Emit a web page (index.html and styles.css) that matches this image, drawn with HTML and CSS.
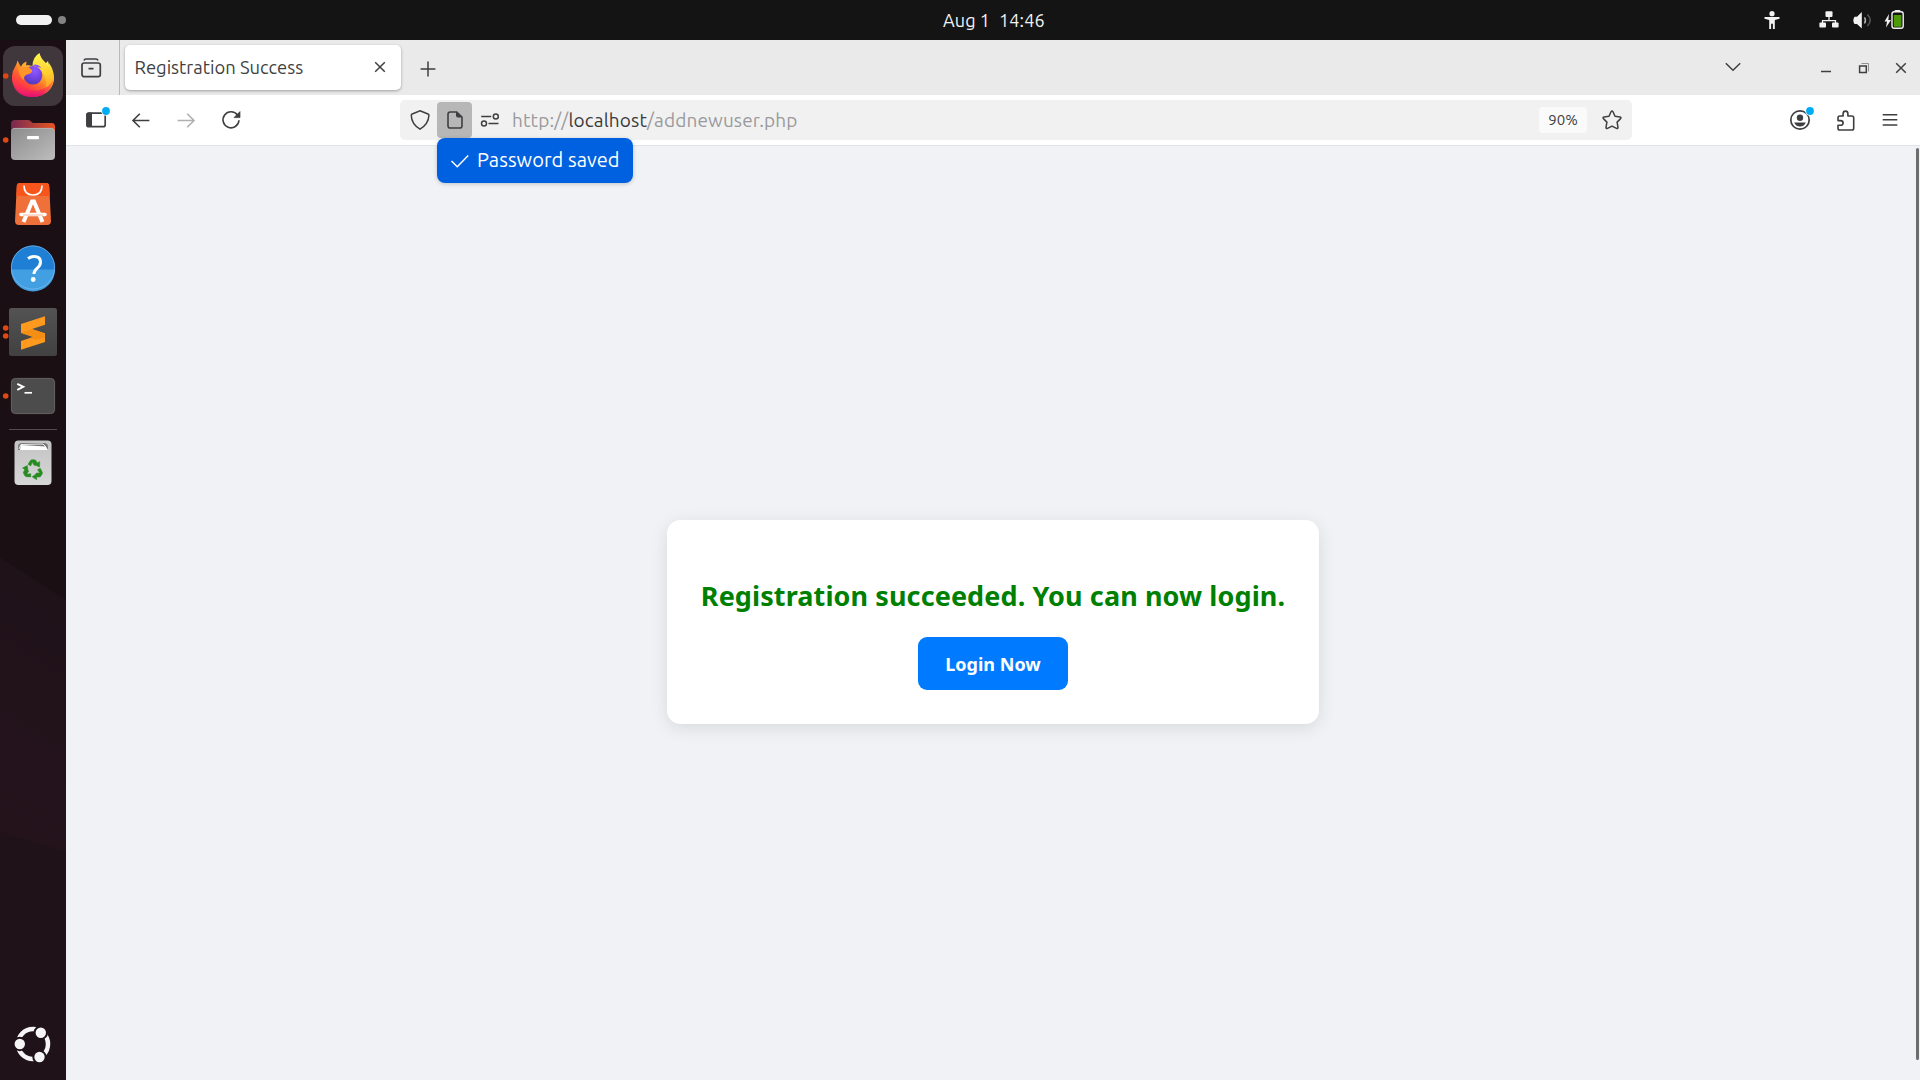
FILE: index.html
```html
<!DOCTYPE html>
<html lang="en">
<head>
<meta charset="utf-8">
<title>Registration Success</title>
<link rel="stylesheet" href="styles.css">
</head>
<body>
<header class="topbar">
  <div class="workspaces"><span class="pill"></span><span class="dot"></span></div>
  <div class="clock"><span class="t-date">Aug 1</span><span class="t-time">14:46</span></div>
  <div class="tray">
    <svg class="i-access" width="16" height="20" viewBox="0 0 16 20" fill="#f2f2f2"><circle cx="8" cy="3.7" r="2.6"/><path d="M.5 7h15v1.8L10.8 10v9H8.9v-5.2H7.1V19H5.200V10L.5 8.800z"/></svg>
    <svg class="i-net" width="20" height="20" viewBox="0 0 20 20"><path d="M10 7v3M3.500 13v-2.300h13V13" fill="none" stroke="#f2f2f2" stroke-width="1.300"/><g fill="#f2f2f2"><rect x="6.500" y="1.300" width="7" height="5.600" rx="1"/><rect x=".4" y="12.500" width="6.600" height="5" rx="1"/><rect x="13" y="12.500" width="6.600" height="5" rx="1"/></g></svg>
    <svg class="i-vol" width="20" height="20" viewBox="0 0 20 20"><path d="M1.500 6.800H4L8.800 2v16.500L4 14H1.500Q.3 12 .3 10.400T1.500 6.800z" fill="#f2f2f2"/><path d="M11.500 7.300q2 3 0 6.200" fill="none" stroke="#b0b0b0" stroke-width="1.400"/><path d="M14.500 4.500q5.500 5.800 0 11.500" fill="none" stroke="#5c5c5c" stroke-width="1.400"/></svg>
    <svg class="i-bat" width="22" height="20" viewBox="0 0 22 20"><path d="M5 4 .5 11.500H3L2 17.500l5-7.500H4.300z" fill="#f2f2f2"/><rect x="10.500" y="0" width="6" height="3" rx="1" fill="#f2f2f2"/><rect x="8" y="1.800" width="11.200" height="16.500" rx="2.200" fill="#141414" stroke="#f2f2f2" stroke-width="1.400"/><rect x="9.800" y="5" width="7.600" height="11.800" fill="#4e9a06"/></svg>
  </div>
</header>
<div class="desktop">
  <nav class="dock">
    <div class="app active"><svg width="60" height="60" viewBox="0 0 60 60">
      <defs>
        <linearGradient id="fx" x1=".85" y1=".1" x2=".2" y2=".95"><stop offset="0" stop-color="#fff44f"/><stop offset=".3" stop-color="#ffb02a"/><stop offset=".55" stop-color="#ff6a2b"/><stop offset=".8" stop-color="#ff3647"/><stop offset="1" stop-color="#e31587"/></linearGradient>
        <radialGradient id="fp" cx=".6" cy=".25" r=".8"><stop offset="0" stop-color="#9059ff"/><stop offset=".5" stop-color="#7542e5"/><stop offset="1" stop-color="#4a3bb5"/></radialGradient>
        <linearGradient id="fy" x1=".5" y1="0" x2=".6" y2="1"><stop offset="0" stop-color="#fff44f"/><stop offset=".5" stop-color="#ffd02e"/><stop offset="1" stop-color="#ff8e25"/></linearGradient>
        <linearGradient id="fb" x1="0" y1="0" x2="0" y2="1"><stop offset="0" stop-color="#ff6b2b" stop-opacity="0"/><stop offset=".65" stop-color="#ff314f" stop-opacity=".6"/><stop offset="1" stop-color="#e00f78"/></linearGradient>
      </defs>
      <path d="M9 30q0-5 3-9l1.500-3 1-3.500 2 4 1.500 2.200 3.500.3L24 19l6 1 10 0 5-5 2 8q4 5 4 10.500A21 19 0 0 1 9 30z" fill="url(#fx)"/>
      <path d="M29.500 20q0-9 7-13 1 5 5.500 9 2 2 3.500 5l.5-4q5 7 5 15-1 12-11 16 7-12-1-22-4-5-9.500-6z" fill="url(#fy)"/>
      <path d="M9 30q0 21 21 21 17-1 21-18-5 9-15 11-15 2-18-10l-3-10q-5 1-6 6z" fill="url(#fb)"/>
      <circle cx="30" cy="29.300" r="9.300" fill="url(#fp)"/>
      <path d="M29.500 19.200q5-2 9 2.800-3-1.200-5-.5-1-1.500-4-2.300z" fill="#8f5af2"/>
      <path d="M15 20.500q2.500 1 6 .3 4-1.300 8 3.200 1 3-5 4.500-3.500 1.500-3.500 5.500-5-4-5.500-13.500z" fill="#ff9428"/>
      <path d="M18 21q1-4 5.500-5.500-1 3.500.5 5.500z" fill="#ffab2e"/>
      <circle class="run" cx="2.700" cy="30" r="2.800"/></svg></div>
    <div class="app"><svg width="60" height="60" viewBox="0 0 60 60">
      <defs><linearGradient id="fo"><stop offset="0" stop-color="#772953"/><stop offset="1" stop-color="#e95420"/></linearGradient><linearGradient id="fg" x1="0" y1="0" x2="1" y2="1"><stop offset="0" stop-color="#8b8b8b"/><stop offset="1" stop-color="#bdbdbd"/></linearGradient></defs>
      <path d="M8 26V14q0-4 4-4h13q2 0 3 1.500T31 13h18q3 0 3 4v9z" fill="url(#fo)"/>
      <rect x="8" y="18" width="44" height="32" rx="4" fill="url(#fg)"/><path d="M9 20q1-1.600 3-1.600h36q2 0 3 1.600" fill="none" stroke="#b9b9b9" stroke-width=".8"/>
      <rect x="24" y="26" width="12" height="3.200" rx="1" fill="#fff"/>
      <circle class="run" cx="2.700" cy="30" r="2.800"/></svg></div>
    <div class="app"><svg width="60" height="60" viewBox="0 0 60 60">
      <path d="M17 9h26q3 0 3.200 3L48 47q0 4-4 4H16q-4 0-4-4l1.800-35Q14 9 17 9z" fill="#f0703a"/>
      <path d="M17 9h26q3 0 3.200 3l.5 10H13.300l.5-10Q14 9 17 9z" fill="#f8551c"/>
      <path d="M21 11.500q0 9.500 9 9.500t9-9.500" fill="none" stroke="#fff" stroke-width="1.700"/>
      <path d="M20.500 48 29 27.500h2L39.500 48" fill="none" stroke="#fff" stroke-width="4"/><path d="M18 40.500h24" stroke="#fff" stroke-width="3.600" stroke-linecap="round"/><path d="M20 41h20" stroke="#f3a47f" stroke-width=".8"/></svg></div>
    <div class="app"><svg width="60" height="60" viewBox="0 .5 60 60">
      <circle cx="30" cy="30" r="22" fill="#1f7fd5"/><path d="M8 32h44a22 22 0 0 1-44 0z" fill="#429fe2"/><circle cx="30" cy="30" r="21.600" fill="none" stroke="#7cbcec" stroke-width=".7"/>
      <path d="M25 21q3-2 6-2 6.500 0 6.500 5.500 0 3.500-3.500 6.300-3 2.600-3 5.700" fill="none" stroke="#fff" stroke-width="3"/><circle cx="30.200" cy="42" r="2.400" fill="#fff"/></svg></div>
    <div class="app"><svg width="60" height="60" viewBox="0 0 60 60">
      <defs><linearGradient id="sg" x1="0" y1="0" x2="0" y2="1"><stop offset="0" stop-color="#535353"/><stop offset="1" stop-color="#414141"/></linearGradient></defs>
      <rect x="6" y="6" width="48" height="48" rx="2.500" fill="url(#sg)"/>
      <path d="m18 30 24 7.500-14-11z" fill="#d87a08"/><path d="M42 14.200v8.500L29 27l13 4.300v8.600l-24 7.800v-8.600l12-4L18 31v-9z" fill="#ff9a1f"/><path d="m18 30.500 12 4.300-3 1.300 6 2 9-2.500v-3.800l-13-4.800z" fill="#f28a12" opacity=".75"/>
      <circle class="run" cx="2.700" cy="26" r="2.800"/><circle class="run" cx="2.700" cy="34" r="2.800"/></svg></div>
    <div class="app"><svg width="60" height="60" viewBox="0 0 60 60">
      <rect x="8.400" y="12.400" width="43.200" height="35.200" rx="4" fill="#4c4c4c" stroke="#646464"/>
      <path d="m14.300 17.800 6 3-6 3" fill="none" stroke="#fff" stroke-width="1.900"/><path d="M21.500 26.800H29" stroke="#fff" stroke-width="1.700"/>
      <circle class="run" cx="2.700" cy="30" r="2.800"/></svg></div>
    <hr class="sep">
    <div class="app"><svg width="60" height="60" viewBox="0 0 60 60">
      <defs><linearGradient id="tg" x1="0" y1="0" x2="0" y2="1"><stop offset="0" stop-color="#c4c4c4"/><stop offset="1" stop-color="#d6d6d6"/></linearGradient></defs>
      <rect x="11.500" y="7.500" width="37" height="44.500" rx="4" fill="url(#tg)"/><path d="M15 17v-3q0-4 4-4h22q4 0 4 4v3z" fill="#777"/><path d="m17 17 .8-5 25 1.500L45 17z" fill="#fff"/><path d="m16 16 2-4.500 22-.5 3 3" fill="none" stroke="#eee"/>
      <g transform="translate(30 36.800)"><g id="ra" fill="#268c22" stroke="#268c22" stroke-width=".5"><path d="m-5-5.500 2.400-3.700q.6-.8 1.500-.8h2.600q1 0 1.500.9L4.600-6.400l-3.400 2L-.7-7.500-2.300-3.900z"/><path d="M6.800-8.200 6.500-2.800 1.300-5z"/></g><use href="#ra" transform="rotate(120)"/><use href="#ra" transform="rotate(240)"/></g></svg></div>
    <div class="launcher"><svg width="60" height="60" viewBox="0 0 60 60">
      <circle cx="30" cy="30" r="15" fill="none" stroke="#f5f5f5" stroke-width="4.500"/>
      <g fill="#f5f5f5" stroke="#1f1319" stroke-width="2"><circle cx="16.800" cy="30" r="6.200"/><circle cx="37.800" cy="18.700" r="6.200"/><circle cx="36.500" cy="43" r="6.200"/></g></svg></div>
  </nav>
  <main class="browser">
    <div class="tabstrip">
      <div class="recent"><svg width="22" height="22" viewBox="0 0 22 22"><g class="ln" stroke-width="1.700"><rect x="2" y="6" width="18.300" height="13.700" rx="2.200"/><path d="M4 3.600Q4.500 2 6 2h10q1.500 0 2 1.600M8.500 11.700h5"/></g></svg></div>
      <div class="tab"><span class="t-tab">Registration Success</span><svg width="12" height="12" viewBox="0 0 12 12"><path class="ln" stroke-width="1.500" d="m1.200 1.200 9.600 9.600m0-9.600-9.600 9.600"/></svg></div>
      <svg class="plus" width="16" height="16" viewBox="0 0 16 16"><path class="ln" stroke-width="1.500" d="M8 .6v14.800M.6 8h14.800"/></svg>
      <svg class="chev" width="16" height="10" viewBox="0 0 16 10"><path class="ln" stroke-width="1.500" d="m.8 1.200 7.200 7 7.200-7"/></svg>
      <div class="wincontrols">
        <svg width="12" height="12" viewBox="0 0 12 12"><path class="ln" stroke-width="1.500" d="M0 9.500h10"/></svg>
        <svg width="12" height="12" viewBox="0 0 12 12"><path d="M3.500 1.500h7v8" fill="none" stroke="#929292"/><rect class="ln" stroke-width="1.500" x="1.600" y="4" width="6.700" height="6.500"/></svg>
        <svg width="12" height="12" viewBox="0 0 12 12"><path class="ln" stroke-width="1.500" d="m1.200 1.200 9.600 9.600m0-9.600-9.600 9.600"/></svg>
      </div>
    </div>
    <div class="toolbar">
      <svg class="b-side" width="26" height="26" viewBox="0 0 26 26"><rect class="ln" stroke-width="1.700" x="2" y="6.200" width="18.200" height="13.500" rx="2"/><path d="M3 5.500h4V20H3q-1.800 0-1.800-2V8q0-2.500 1.800-2.500z" fill="#3f3f42"/><circle cx="21" cy="4" r="4.800" fill="#fff"/><circle cx="21" cy="4" r="3.900" fill="#00adf5"/></svg>
      <svg class="b-back" width="20" height="20" viewBox="0 0 20 20"><path class="ln" stroke-width="1.600" d="M18.400 10.500H2M8.800 3.700 2 10.500l6.800 6.700"/></svg>
      <svg class="b-fwd" width="20" height="20" viewBox="0 0 20 20"><path class="ln pale" stroke-width="1.600" d="M1.600 10.500H18M11.200 3.700l6.800 6.800-6.800 6.700"/></svg>
      <svg class="b-reload" width="20" height="20" viewBox="0 0 20 20"><path class="ln" stroke-width="1.600" d="M16.500 5.100A8 8 0 1 0 18 10.300"/><path d="M19 1.600v6H13z" fill="#3f3f42" stroke="#3f3f42" stroke-width=".7" stroke-linejoin="round"/></svg>
      <div class="urlbar">
        <svg class="b-shield" width="20" height="22" viewBox="0 0 20 22"><path class="ln" stroke-width="1.500" d="M10 1.700 18 5q1 .4.900 1.500Q18.500 15 10 20.200 1.500 15 1.300 6.500 1.200 5.400 2.200 5z"/></svg>
        <div class="doctile"><svg width="16" height="18" viewBox="0 0 16 18"><path class="ln" stroke-width="1.600" d="M3.200 1h6.500l5.300 5v8.700Q15 17 12.800 17H3.200Q1 17 1 14.700V3.300Q1 1 3.200 1z"/><path d="M9 .5v4q0 2 2 2h4.300z" fill="#3f3f42"/></svg></div>
        <svg class="b-perm" width="20" height="14" viewBox="0 0 20 14"><g class="ln" stroke-width="1.500"><circle cx="15.800" cy="3.500" r="2.500"/><path d="M1.200 3.500h10M8.500 10.500h10"/><circle cx="4" cy="10.500" r="2.500"/></g></svg>
        <div class="t-url">http://<b>localhost</b>/addnewuser.php</div>
        <div class="zoom"><span>90%</span></div>
        <svg class="b-star" width="20" height="20" viewBox="0 0 20 20"><path class="ln" stroke-width="1.500" stroke-linejoin="round" d="M9 1.800q1-1.500 2 0l2 4.400 5 .7q1.700.4.600 1.700l-3.500 3.500.9 5.200q.1 1.700-1.500 1.100L10 16.100l-4.500 2.300q-1.600.6-1.500-1.100l.9-5.200L1.400 8.600Q.300 7.300 2 6.900l5-.7z"/></svg>
        <div class="toast"><svg width="20" height="16" viewBox="0 0 20 16"><path d="m1.500 8 5.800 5.700L18.200 2.500" fill="none" stroke="#fff" stroke-width="1.500"/></svg><span class="t-toast">Password saved</span></div>
      </div>
      <svg class="b-acct" width="26" height="26" viewBox="0 0 26 26"><circle class="ln" stroke-width="1.700" cx="11" cy="13" r="9.200"/><circle cx="11" cy="10.700" r="3.200" fill="#3f3f42"/><path d="M5.200 15.500h11.600q-1.600 4-5.800 4t-5.800-4z" fill="#3f3f42"/><circle cx="21" cy="4" r="4.800" fill="#fff"/><circle cx="21" cy="4" r="3.900" fill="#00adf5"/></svg>
      <svg class="b-ext" width="18" height="21" viewBox="0 0 18 21"><path class="ln" stroke-width="1.600" stroke-linejoin="round" d="M2.800 6h3.300V3.700q0-2.600 2.400-2.600t2.400 2.600V6h4q1.800 0 1.800 1.800v10.400q0 1.800-1.800 1.800H2.700Q1 20 1 18.200v-3h2.500q2.600 0 2.600-2.300t-2.600-2.300H1V7.800Q1 6 2.800 6z"/></svg>
      <svg class="b-menu" width="16" height="14" viewBox="0 0 16 14"><path class="ln" stroke-width="1.500" d="M.7 1.700h14.600M.7 6.800h14.600M.7 11.900h14.600"/></svg>
    </div>
    <section class="page">
      <div class="card">
        <h2><span>Registration succeeded. You can now login.</span></h2>
        <a class="login"><span>Login Now</span></a>
      </div>
      <div class="scroll"></div>
    </section>
  </main>
</div>
</body>
</html>
```
FILE: styles.css
```css
* { box-sizing: border-box; }
body { margin: 0; width: 1920px; height: 1080px; overflow: hidden; display: flex; flex-direction: column; font-family: "Ubuntu", "Noto Sans", "Open Sans", sans-serif; color: #3f3f42; }
svg { display: block; flex: none; overflow: visible; }
span, .t-url { white-space: nowrap; }

.topbar { height: 40px; flex: none; background: #141414; display: grid; grid-template-columns: 943px 1fr auto; align-items: center; }
.workspaces { display: flex; align-items: center; gap: 6px; padding-left: 16px; }
.pill { width: 36px; height: 10px; border-radius: 5px; background: #f2f2f2; }
.dot { width: 8px; height: 8px; border-radius: 50%; background: #848484; }
.clock { display: flex; gap: 9px; padding-bottom: 1px; font-size: 18px; letter-spacing: .1px; color: #f2f2f2; line-height: 24px; }
.tray { display: flex; padding-right: 14px; }
.i-net { margin-left: 39px; }
.i-vol { margin-left: 14px; }
.i-bat { margin-left: 11px; }

.desktop { flex: 1; display: flex; min-height: 0; }
.dock { width: 66px; flex: none; padding: 6px 3px; display: flex; flex-direction: column; gap: 4px;
  background: linear-gradient(197deg, transparent 775px, #1f1218 777px), linear-gradient(213deg, #1b0f15 0, #1a0f13 469px, #1f1219 471px, #25131c 680px); }
.app { width: 60px; height: 60px; border-radius: 12px; flex: none; }
.app.active { background: #40373c; }
.run { fill: #dd4814; }
.sep { width: 48px; height: 1px; margin: -1px 6px 0; border: 0; background: #544b50; flex: none; }
.sep + .app { margin-top: -1px; }
.launcher { margin-top: auto; }

.browser { flex: 1; display: flex; flex-direction: column; min-width: 0; }
.tabstrip { height: 55px; flex: none; background: #eaeaea; display: flex; align-items: center; }
.ln { fill: none; stroke: #3f3f42; }
.pale { stroke: #b0b0b2; }
.recent { width: 54px; height: 55px; padding: 17px 0 0 14px; border-right: 1px solid #b9b9b9; }
.tab { width: 276px; height: 45px; margin-left: 5px; padding: 0 15px 1px 9.500px; border-radius: 5px; background: #fff; box-shadow: 0 1px 3px rgba(0,0,0,.32); display: flex; align-items: center; justify-content: space-between; font-size: 18.4px; }
.t-tab { padding-bottom: 1px; }
.plus { margin-left: 18.5px; margin-top: 2px; }
.chev { margin: 0 0 1px auto; }
.wincontrols { display: flex; gap: 25px; margin: 1px 13px 0 80px; }
.toolbar { height: 51px; flex: none; background: #fff; border-bottom: 1px solid #e2e3e6; display: flex; align-items: center; }
.b-side { margin-left: 19px; }
.b-back { margin-left: 20px; }
.b-fwd { margin-left: 25px; }
.b-reload { margin-left: 25px; }
.urlbar { position: relative; width: 1232px; height: 40px; margin-left: 159px; border-radius: 5px; background: #f1f1f1; display: flex; align-items: center; padding: 0 10px; }
.doctile { width: 35px; height: 36px; margin-left: 7px; border-radius: 4px; background: #b7b7b7; display: grid; place-items: center; }
.b-perm { margin-left: 8px; }
.t-url { margin-left: 12px; font-size: 19px; letter-spacing: .13px; color: #9a9a9c; }
.t-url b { font-weight: 400; color: #3a3a3d; }
.zoom { width: 48px; height: 26px; margin-left: auto; border-radius: 4px; background: #fafafa; display: flex; align-items: center; justify-content: center; font-size: 15px; padding-bottom: 1px; }
.b-star { margin-left: 15px; }
.toast { position: absolute; left: 37px; top: 38px; width: 196px; height: 45px; border-radius: 8px; background: #0061e0; box-shadow: 0 1px 4px rgba(0,0,0,.2); color: #fff; display: flex; align-items: center; padding-left: 13px; gap: 7px; font-size: 20px; letter-spacing: .05px; z-index: 2; }
.t-toast { padding-bottom: 2px; }
.b-acct { margin-left: 157px; }
.b-ext { margin-left: 22px; }
.b-menu { margin-left: 27px; }

.page { position: relative; flex: 1; background: #f0f2f5; display: flex; justify-content: center; padding-top: 374px; }
.card { width: 652px; height: 204px; border-radius: 13.500px; background: #fff; box-shadow: 0 4px 18px rgba(0,0,0,.1); display: flex; flex-direction: column; align-items: center; font-family: "Noto Sans", sans-serif; }
.card h2 { margin: 57px 0 0; font-size: 27px; letter-spacing: .1px; line-height: 38px; font-weight: 700; color: #008000; }
.login { width: 150px; height: 53px; margin-top: 22px; border-radius: 9px; background: #007bff; color: #fff; font-size: 18px; font-weight: 700; display: flex; align-items: center; justify-content: center; }
.scroll { position: absolute; right: 1px; top: 2px; width: 3px; height: 912px; border-radius: 2px; background: #6e6e6e; }
```
